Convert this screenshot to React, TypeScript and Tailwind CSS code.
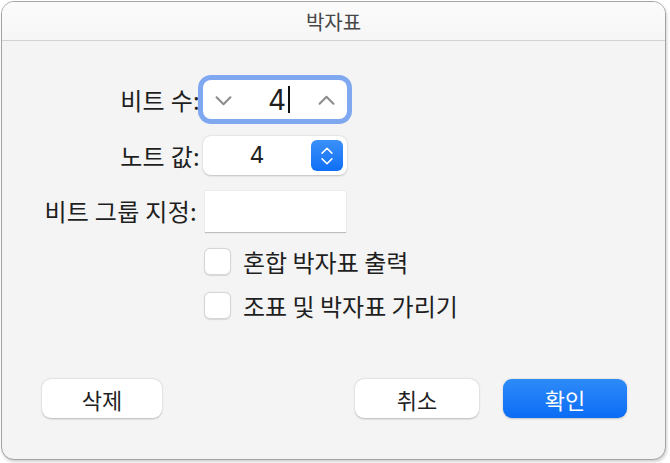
import React from "react";

function Chevron({ up, className }: { up?: boolean; className?: string }) {
  return (
    <svg viewBox="0 0 16 9" className={className} fill="none">
      <path
        d={up ? "M1.5 8 L8 1.5 L14.5 8" : "M1.5 1 L8 7.5 L14.5 1"}
        stroke="currentColor"
        strokeWidth="2"
        strokeLinecap="round"
        strokeLinejoin="round"
      />
    </svg>
  );
}

export default function App() {
  return (
    <div className="w-[670px] h-[463px] bg-white pl-px pt-px font-['Noto_Sans_CJK_KR','Noto_Sans',sans-serif]">
      <div className="w-[665px] h-[459px] rounded-[13px] border border-[#a3a3a3] bg-[#f4f4f4] shadow-[1px_2px_3px_rgba(0,0,0,0.18)] overflow-hidden flex flex-col">
        {/* Title bar */}
        <div className="h-[39px] shrink-0 border-b border-[#d2d2d2] bg-gradient-to-b from-[#fbfbfb] to-[#f6f6f6] flex items-center justify-center">
          <span className="text-[20px] text-[#474747] leading-none mt-[1px]">박자표</span>
        </div>

        {/* Body */}
        <div className="flex-1 flex flex-col">
          <div className="grid grid-cols-[198px_auto] gap-x-[3px] items-center mt-[39px] text-[24px] text-[#1f1f1f] leading-none">
            {/* Row 1 */}
            <div className="text-right tracking-[0.3px]">비트 수:</div>
            <div className="w-[144px] h-[39px] rounded-[8px] bg-white shadow-[0_0_0_5px_#7fa8f0] flex items-center justify-between px-[12px] text-[#8d8d8d]">
              <Chevron className="w-[17px] h-[10px] mt-[2px]" />
              <div className="flex items-center ml-[8px]">
                <span className="text-[28px] text-[#1f1f1f] font-['Inter',sans-serif] leading-none">4</span>
                <span className="w-[2px] h-[27px] bg-[#111] ml-[2px]"></span>
              </div>
              <Chevron up className="w-[17px] h-[10px]" />
            </div>

            {/* Row 2 */}
            <div className="text-right mt-[17px] tracking-[0.3px]">노트 값:</div>
            <div className="mt-[17px] w-[144px] h-[39px] rounded-[8px] bg-white shadow-[0_0.5px_2px_rgba(0,0,0,0.22)] flex items-center pr-[4px]">
              <span className="flex-1 text-center text-[23px] text-[#222] font-['Inter',sans-serif]">4</span>
              <div className="w-[32px] h-[31px] rounded-[6px] bg-gradient-to-b from-[#3a90f8] to-[#0d6ef6] flex flex-col items-center justify-center gap-[4px] text-white">
                <Chevron up className="w-[12px] h-[7px]" />
                <Chevron className="w-[12px] h-[7px]" />
              </div>
            </div>

            {/* Row 3 */}
            <div className="text-right mt-[15px] pr-[3px] tracking-[0.3px]">비트 그룹 지정:</div>
            <div className="mt-[15px] ml-[2px] w-[141px] h-[42px] bg-white border-t border-[#ececec] shadow-[0_1px_1px_rgba(0,0,0,0.22)]"></div>

            {/* Checkbox 1 */}
            <div className="mt-[16px]"></div>
            <div className="mt-[16px] flex items-center gap-[12px] ml-[1px]">
              <div className="w-[27px] h-[27px] rounded-[6px] bg-white border border-[#d6d6d6] shadow-[0_0.5px_1px_rgba(0,0,0,0.12)]"></div>
              <span>혼합 박자표 출력</span>
            </div>

            {/* Checkbox 2 */}
            <div className="mt-[17px]"></div>
            <div className="mt-[17px] flex items-center gap-[12px] ml-[1px]">
              <div className="w-[27px] h-[27px] rounded-[6px] bg-white border border-[#d6d6d6] shadow-[0_0.5px_1px_rgba(0,0,0,0.12)]"></div>
              <span>조표 및 박자표 가리기</span>
            </div>
          </div>

          {/* Buttons */}
          <div className="mt-[60px] flex items-center pl-[40px] pr-[38px] text-[22px] leading-none">
            <button className="w-[120px] h-[39px] rounded-[9px] bg-white text-[#1f1f1f] shadow-[0_0.5px_2px_rgba(0,0,0,0.25)]">삭제</button>
            <div className="flex-1"></div>
            <button className="w-[124px] h-[39px] rounded-[9px] bg-white text-[#1f1f1f] shadow-[0_0.5px_2px_rgba(0,0,0,0.25)]">취소</button>
            <button className="ml-[24px] w-[124px] h-[39px] rounded-[9px] bg-gradient-to-b from-[#2d8bf8] to-[#0a6cf5] text-white shadow-[0_0.5px_2px_rgba(0,0,0,0.2)]">확인</button>
          </div>
        </div>
      </div>
    </div>
  );
}
